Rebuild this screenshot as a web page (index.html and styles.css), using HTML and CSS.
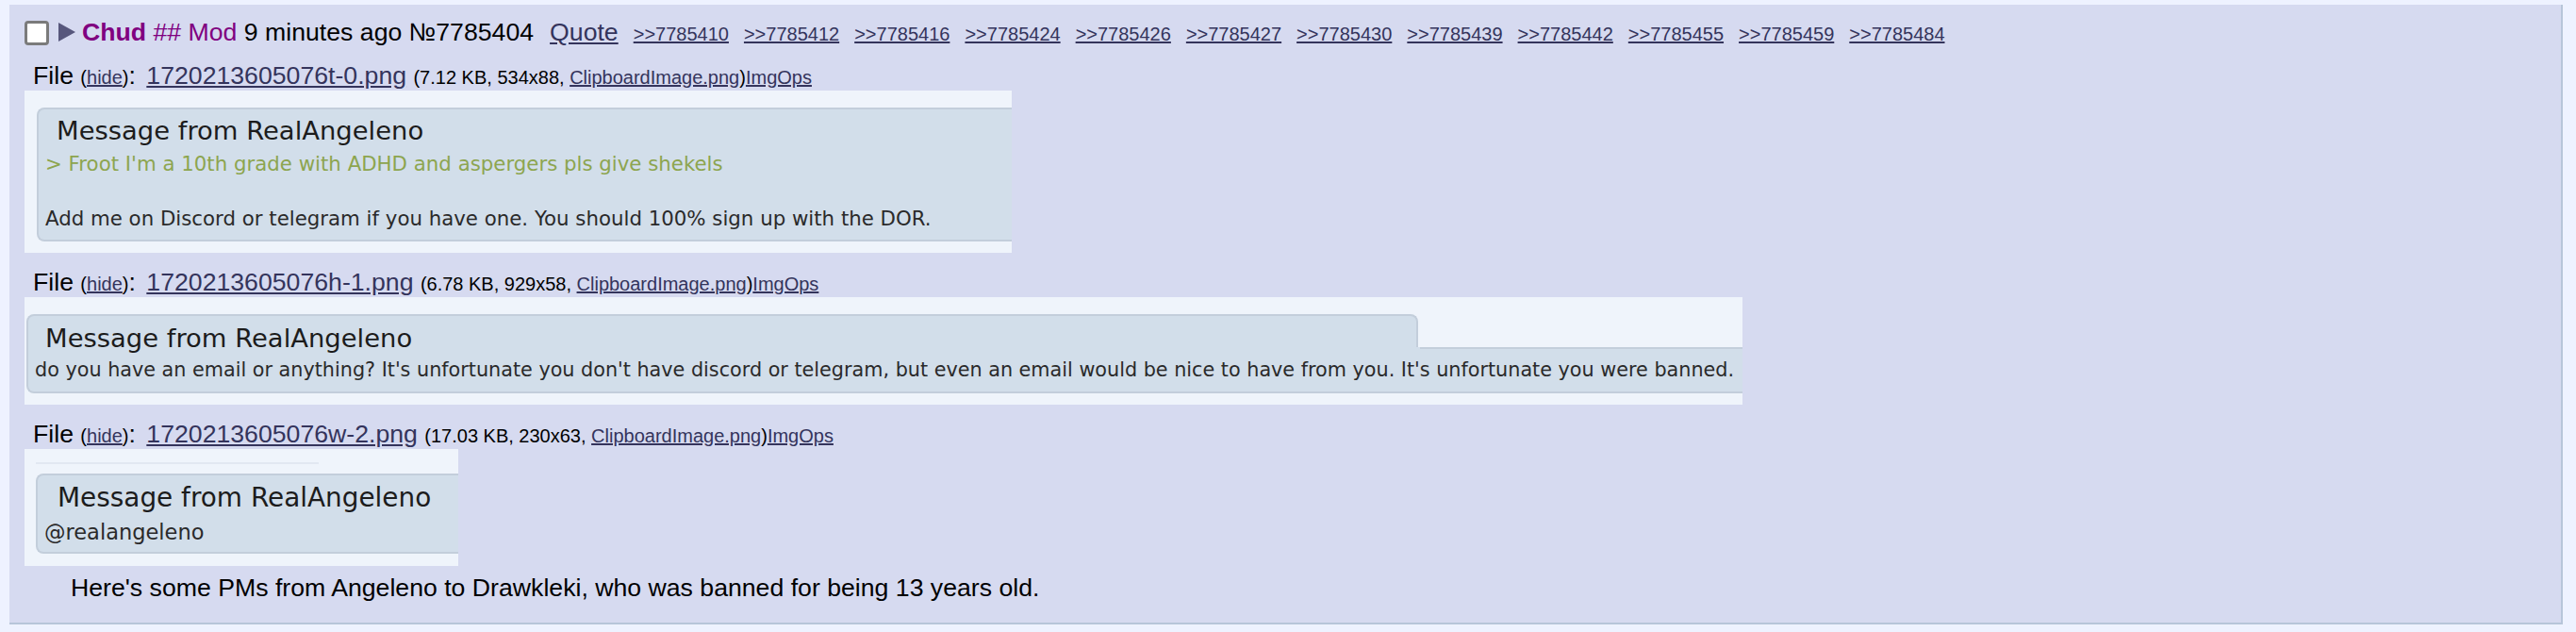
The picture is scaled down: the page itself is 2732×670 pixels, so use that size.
FILE: index.html
```html
<!DOCTYPE html>
<html>
<head>
<meta charset="utf-8">
<link rel="stylesheet" href="styles.css">
</head>
<body>
<div class="post">
  <div class="header">
    <span class="chk"></span>
    <svg class="tri" width="18" height="20" viewBox="0 0 18 20"><polygon points="0,0 18,10 0,20" fill="#57577c"/></svg>
    <span class="intro"><b class="name">Chud</b> <span class="cap">## Mod</span> 9 minutes ago №7785404</span>
    <a class="quote" href="#">Quote</a>
    <span class="mentions"><a href="#">&gt;&gt;7785410</a><a href="#">&gt;&gt;7785412</a><a href="#">&gt;&gt;7785416</a><a href="#">&gt;&gt;7785424</a><a href="#">&gt;&gt;7785426</a><a href="#">&gt;&gt;7785427</a><a href="#">&gt;&gt;7785430</a><a href="#">&gt;&gt;7785439</a><a href="#">&gt;&gt;7785442</a><a href="#">&gt;&gt;7785455</a><a href="#">&gt;&gt;7785459</a><a href="#">&gt;&gt;7785484</a></span>
  </div>

  <div class="fileinfo">File <span class="small">(<a href="#">hide</a>)</span>: <a class="fname" href="#">1720213605076t-0.png</a> <span class="small">(7.12 KB, 534x88, <a href="#">ClipboardImage.png</a>)<a href="#">ImgOps</a></span></div>
  <div class="thumb img1">
    <div class="box1">
      <div class="mtitle">Message from RealAngeleno</div>
      <div class="mline green">&gt; Froot I'm a 10th grade with ADHD and aspergers pls give shekels</div>
      <div class="mline gap">Add me on Discord or telegram if you have one. You should 100% sign up with the DOR.</div>
    </div>
  </div>

  <div class="fileinfo">File <span class="small">(<a href="#">hide</a>)</span>: <a class="fname" href="#">1720213605076h-1.png</a> <span class="small">(6.78 KB, 929x58, <a href="#">ClipboardImage.png</a>)<a href="#">ImgOps</a></span></div>
  <div class="thumb img2">
    <div class="box2title mtitle">Message from RealAngeleno</div>
    <div class="box2body">do you have an email or anything? It's unfortunate you don't have discord or telegram, but even an email would be nice to have from you. It's unfortunate you were banned.</div>
  </div>

  <div class="fileinfo">File <span class="small">(<a href="#">hide</a>)</span>: <a class="fname" href="#">1720213605076w-2.png</a> <span class="small">(17.03 KB, 230x63, <a href="#">ClipboardImage.png</a>)<a href="#">ImgOps</a></span></div>
  <div class="thumb img3">
    <div class="topline"></div>
    <div class="box3">
      <div class="mtitle t3">Message from RealAngeleno</div>
      <div class="mline handle">@realangeleno</div>
    </div>
  </div>

  <div class="bodytext">Here's some PMs from Angeleno to Drawkleki, who was banned for being 13 years old.</div>
</div>
</body>
</html>
```

FILE: styles.css
```css
html, body {
  margin: 0;
  background: #eef2ff;
}
body {
  padding: 5px 0 0 10px;
  height: 670px;
  box-sizing: border-box;
  font-family: "Liberation Sans", Arial, sans-serif;
  color: #000;
}
a {
  color: #34345c;
  text-decoration: underline;
}
.post {
  width: 2708px;
  height: 657px;
  box-sizing: border-box;
  background: #d6daf0;
  border-right: 2px solid #b7c5d9;
  border-bottom: 2px solid #b7c5d9;
  padding: 14px 0 0 16px;
}
.header {
  display: flex;
  align-items: baseline;
  height: 30px;
  line-height: 30px;
  font-size: 26.67px;
  white-space: nowrap;
}
.chk {
  align-self: center;
  width: 26px;
  height: 26px;
  margin-top: 2px;
  box-sizing: border-box;
  border: 3px solid #7b7b7b;
  border-radius: 4px;
  background: #fff;
}
.tri {
  align-self: center;
  margin-left: 10px;
  flex: none;
}
.intro {
  margin-left: 7px;
}
.name {
  color: #800080;
  font-weight: bold;
}
.cap {
  color: #800080;
}
.quote {
  margin-left: 17px;
}
.mentions a {
  font-size: 20px;
  margin-left: 16px;
}
.fileinfo {
  margin-top: 16px;
  height: 30px;
  line-height: 30px;
  padding-left: 9px;
  font-size: 26.67px;
  white-space: nowrap;
}
.fname {
  margin-left: 4px;
}
.small {
  font-size: 20px;
}
.thumb {
  margin-top: 1px;
  box-sizing: border-box;
  overflow: hidden;
  background: #eff4fb;
  color: #222;
  font-family: "DejaVu Sans", Verdana, sans-serif;
}
.mtitle {
  font-size: 27.4px;
  line-height: 30px;
  color: #1c1c1c;
  white-space: nowrap;
}
.mline {
  font-size: 21.3px;
  line-height: 24px;
  padding-left: 7px;
  color: #2a2a2a;
  white-space: nowrap;
}
.green {
  color: #8da54f;
  margin-top: 8px;
}
.gap {
  margin-top: 34px;
}
.img1 {
  width: 1047px;
  height: 172px;
  padding: 18px 0 0 13px;
}
.box1 {
  height: 142px;
  box-sizing: border-box;
  background: #d2deea;
  border: 2px solid #c3cedb;
  border-right: none;
  border-radius: 8px 0 0 8px;
  padding-top: 8px;
}
.box1 .mtitle {
  padding-left: 19px;
}
.img2 {
  width: 1822px;
  height: 114px;
  padding: 18px 0 0 2px;
}
.box2title {
  width: 1476px;
  height: 35px;
  box-sizing: border-box;
  background: #d2deea;
  border: 2px solid #c3cedb;
  border-bottom: none;
  border-radius: 8px 8px 0 0;
  padding: 9px 0 0 18px;
}
.box2body {
  height: 49px;
  box-sizing: border-box;
  border-left: 2px solid #c3cedb;
  border-bottom: 2px solid #c3cedb;
  border-radius: 0 0 0 8px;
  background: linear-gradient(#c3cedb, #c3cedb) right top / calc(100% - 1476px) 2px no-repeat, #d2deea;
  padding: 12px 0 0 7px;
  font-size: 20.74px;
  line-height: 24px;
  color: #2a2a2a;
  white-space: nowrap;
}
.img3 {
  width: 460px;
  height: 124px;
  padding: 14px 0 0 12px;
}
.topline {
  width: 300px;
  height: 2px;
  margin-bottom: 10px;
  background: #e2e8f1;
}
.box3 {
  height: 85px;
  box-sizing: border-box;
  background: #d2deea;
  border: 2px solid #c3cedb;
  border-right: none;
  border-radius: 8px 0 0 8px;
  padding-top: 9px;
}
.t3 {
  font-size: 27.9px;
  padding-left: 21px;
}
.handle {
  margin-top: 9px;
  font-size: 22.5px;
}
.bodytext {
  margin-top: 8px;
  padding-left: 49px;
  font-size: 26.67px;
  line-height: 30px;
  white-space: nowrap;
}
```
